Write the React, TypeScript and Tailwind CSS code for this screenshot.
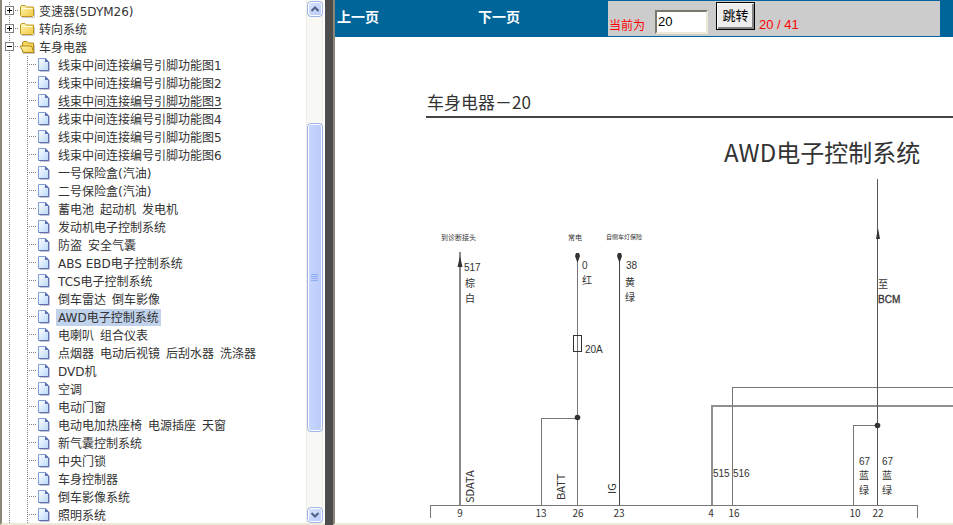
import type { ReactNode } from "react";

const items = [
  "线束中间连接编号引脚功能图1",
  "线束中间连接编号引脚功能图2",
  "线束中间连接编号引脚功能图3",
  "线束中间连接编号引脚功能图4",
  "线束中间连接编号引脚功能图5",
  "线束中间连接编号引脚功能图6",
  "一号保险盒(汽油)",
  "二号保险盒(汽油)",
  "蓄电池\u2002起动机\u2002发电机",
  "发动机电子控制系统",
  "防盗\u2002安全气囊",
  "ABS EBD电子控制系统",
  "TCS电子控制系统",
  "倒车雷达\u2002倒车影像",
  "AWD电子控制系统",
  "电喇叭\u2002组合仪表",
  "点烟器\u2002电动后视镜\u2002后刮水器\u2002洗涤器",
  "DVD机",
  "空调",
  "电动门窗",
  "电动电加热座椅\u2002电源插座\u2002天窗",
  "新气囊控制系统",
  "中央门锁",
  "车身控制器",
  "倒车影像系统",
  "照明系统",
];

const selected = "AWD电子控制系统";
const hovered = "线束中间连接编号引脚功能图3";

/* ---------- tree glyphs ---------- */

function VLine() {
  return (
    <svg className="h-[18px] w-4 shrink-0" viewBox="0 0 16 18" shapeRendering="crispEdges">
      <path d="M7.5 0V18" stroke="#808080" strokeDasharray="1 1" />
    </svg>
  );
}

function Join() {
  return (
    <svg className="h-[18px] w-[18px] shrink-0" viewBox="0 0 18 18" shapeRendering="crispEdges">
      <path d="M9.5 0V18M11 8.5H18" stroke="#808080" strokeDasharray="1 1" />
    </svg>
  );
}

function Expander({ open }: { open?: boolean }) {
  return (
    <svg className="h-[18px] w-4" viewBox="0 0 16 18" shapeRendering="crispEdges">
      <path d="M7.5 0V18M13 8.5H16" stroke="#808080" strokeDasharray="1 1" />
      <rect x="3.5" y="4.5" width="8" height="8" fill="#fff" stroke="#808080" />
      <path d={open ? "M5 8.5H10" : "M5 8.5H10M7.5 6V11"} stroke="#000" />
    </svg>
  );
}

function Folder({ open }: { open?: boolean }) {
  return (
    <svg className="h-[18px] w-[18px] shrink-0" viewBox="0 0 18 18">
      <defs>
        <linearGradient id="folder" x1="0" y1="0" x2="1" y2="1">
          <stop offset="0" stopColor="#fff7b8" />
          <stop offset="1" stopColor="#f3c73c" />
        </linearGradient>
      </defs>
      <path d="M4 15.5H16.5V7" fill="none" stroke="#c9c9d2" />
      {open ? (
        <>
          <path d="M4.5 14V5L5.5 3.5H9L10.5 5H15.5V14Z" fill="#f6d860" stroke="#b08a14" />
          <path d="M2 8H13.5L16 14.5H5.5Z" fill="url(#folder)" stroke="#b08a14" />
        </>
      ) : (
        <>
          <path d="M2.5 13.5V5L3.5 3.5H7L8.5 5H15.5V13.5L14.5 14.5H3.5Z" fill="url(#folder)" stroke="#c09a20" />
          <path d="M3.5 6.5H14.5" stroke="#fffbe0" />
        </>
      )}
    </svg>
  );
}

function Page() {
  return (
    <svg className="h-[18px] w-[18px] shrink-0" viewBox="0 0 18 18">
      <defs>
        <linearGradient id="sheet" x1="0" y1="0" x2="1" y2="1">
          <stop offset="0" stopColor="#fff" />
          <stop offset="1" stopColor="#b9d8fb" />
        </linearGradient>
      </defs>
      <path d="M4 15.5H13.5V6" fill="none" stroke="#c4c6d4" />
      <path d="M2.5 2.5H9.5L12.5 5.5V14.5H2.5Z" fill="url(#sheet)" stroke="#7f9fdb" />
      <path d="M12.5 6V14.5H3" fill="none" stroke="#5f6fb2" />
      <path d="M9 2L13 6H9Z" fill="#5f6fb2" />
    </svg>
  );
}

/* ---------- navigation tree ---------- */

function Branch({ label, open, children }: { label: string; open?: boolean; children?: ReactNode }) {
  return (
    <li>
      <div className="flex h-[18px] items-center">
        <button type="button" aria-label={label} aria-expanded={!!open} className="shrink-0">
          <Expander open={open} />
        </button>
        <Folder open={open} />
        <a href="#" className="ml-[3px] pt-px leading-4">{label}</a>
      </div>
      {children && <ul>{children}</ul>}
    </li>
  );
}

function Leaf({ label }: { label: string }) {
  return (
    <li className="flex h-[18px] items-center">
      <VLine />
      <Join />
      <Page />
      <a
        href="#"
        className={`ml-0.5 px-0.5 pt-px leading-4 ${label === selected ? "bg-[#c0d2ec]" : ""} ${
          label === hovered ? "underline underline-offset-2" : ""
        }`}
      >
        {label}
      </a>
    </li>
  );
}

function ArrowButton({ down }: { down?: boolean }) {
  return (
    <button
      type="button"
      aria-label={down ? "向下" : "向上"}
      className="flex h-4 w-4 shrink-0 items-center justify-center rounded-sm border border-[#9db5ea] bg-linear-to-br from-[#dbe5ff] to-[#b6c9f7] shadow-[inset_0_0_0_1px_#fff]"
    >
      <svg className="h-2 w-2" viewBox="0 0 8 8">
        <path d={down ? "M0.5 2L4 5.5L7.5 2" : "M0.5 6L4 2.5L7.5 6"} fill="none" stroke="#4d6185" strokeWidth="2" />
      </svg>
    </button>
  );
}

function ScrollBar() {
  return (
    <div className="flex w-[17px] shrink-0 flex-col items-center border-x border-[#eeede5] bg-[#f8f8f4] pt-px">
      <ArrowButton />
      <div className="basis-[106px]" />
      <div className="flex w-4 grow-[10] flex-col items-center justify-center gap-px rounded-sm border border-[#9db5ea] bg-linear-to-r from-[#c9d7fe] to-[#b9cbfa] shadow-[inset_0_0_0_1px_#fff]">
        <i className="h-px w-[7px] bg-[#8cabf0]" />
        <i className="h-px w-[7px] bg-[#8cabf0]" />
        <i className="h-px w-[7px] bg-[#8cabf0]" />
        <i className="h-px w-[7px] bg-[#8cabf0]" />
      </div>
      <div className="basis-[75px]" />
      <ArrowButton down />
    </div>
  );
}

function Sidebar() {
  return (
    <aside className="flex w-[325px] shrink-0 border-b-2 border-l-2 border-b-[#ece9d8] border-l-[#8a8778] bg-white pr-0.5">
      <nav className="min-w-0 flex-1 overflow-hidden whitespace-nowrap pt-0.5 font-['DejaVu_Sans','Noto_Sans_CJK_SC',sans-serif] text-[12px] leading-[18px] text-[#333]">
        <ul>
          <Branch label="变速器(5DYM26)" />
          <Branch label="转向系统" />
          <Branch label="车身电器" open>
            {items.map((label) => (
              <Leaf key={label} label={label} />
            ))}
          </Branch>
        </ul>
      </nav>
      <ScrollBar />
    </aside>
  );
}

/* ---------- page bar ---------- */

function Toolbar() {
  return (
    <header className="grid h-[37px] shrink-0 grid-cols-[142fr_131fr_332fr] bg-[#006699] pb-px pr-[13px] pt-px text-[13px]">
      <div className="pl-0.5 pt-1.5">
        <a href="#" className="text-[14px] font-bold text-white">上一页</a>
      </div>
      <div className="pl-px pt-1.5">
        <a href="#" className="text-[14px] font-bold text-white">下一页</a>
      </div>
      <form className="flex items-start whitespace-nowrap bg-[#cccccc] pl-px text-[#f00]" onSubmit={(e) => e.preventDefault()}>
        <label htmlFor="page" className="w-[46px] pt-4 text-[12px]">当前为</label>
        <input
          id="page"
          defaultValue="20"
          className="mt-[9px] h-6 w-[53px] border-2 border-b-[#ece9d8] border-l-[#7a776c] border-r-[#ece9d8] border-t-[#7a776c] bg-white pb-0.5 pl-px text-[13px] text-black outline-none"
        />
        <button
          type="submit"
          className="ml-2 mt-px h-7 w-[39px] border border-black bg-[#ededed] text-[13px] leading-6 text-black shadow-[inset_1px_1px_0_#fff,inset_-2px_-2px_0_#858585]"
        >
          跳转
        </button>
        <span className="ml-1 pt-3.5 text-[13px]">20 / 41</span>
      </form>
    </header>
  );
}

/* ---------- wiring diagram ---------- */

const pins = [
  { x: 460, n: "9" },
  { x: 541, n: "13" },
  { x: 578, n: "26" },
  { x: 619, n: "23" },
  { x: 711, n: "4" },
  { x: 734, n: "16" },
  { x: 855, n: "10" },
  { x: 878, n: "22" },
];

function Wiring() {
  return (
    <svg
      className="block h-[342px] w-[640px] max-w-none overflow-visible"
      viewBox="335 176 640 342"
      fill="#333"
      fontSize="10"
    >
      <g fill="none" stroke="#777" shapeRendering="crispEdges">
        <path d="M430.5 518V505.5H917.5V518" />
        <path d="M460 252V505" strokeWidth="2" stroke="#888" />
        <path d="M577.5 253V505M541.5 505V418.5H577" />
        <path d="M619.5 253V505" stroke="#444" />
        <path d="M712 505V406H1800" strokeWidth="2" stroke="#909090" />
        <path d="M732.5 505V387.5H1800" />
        <path d="M877.5 179V505" stroke="#555" />
        <path d="M853.5 505V425.5H877" />
        <rect x="573.5" y="335.5" width="8" height="16" stroke="#333" />
      </g>
      <path d="M460 256L462.5 267H457.5ZM878 228L880 239H876ZM576 253H579L580 256L577.5 263L575 256ZM618 253H621L622 256L619.5 263L617 256Z" />
      <circle cx="577.5" cy="417.5" r="2.8" />
      <circle cx="877.5" cy="425.5" r="2.8" />

      <text x="441" y="240" fontSize="7">到诊断接头</text>
      <text x="568" y="240" fontSize="7">常电</text>
      <text x="606" y="239" fontSize="6">自侧车灯保险</text>

      {/* wire numbers */}
      <g className="font-['Liberation_Sans',sans-serif]">
        <text x="464" y="271">517</text>
        <text x="582" y="269">0</text>
        <text x="626" y="269">38</text>
        <text x="585" y="353">20A</text>
        <text x="713" y="477">515</text>
        <text x="733" y="477">516</text>
        <text x="859" y="465">67</text>
        <text x="882" y="465">67</text>
        <text x="878" y="303" stroke="#333" strokeWidth="0.3">BCM</text>
      </g>

      {/* wire colours */}
      <g textAnchor="middle">
        <text x="470" y="287">棕</text>
        <text x="470" y="302">白</text>
        <text x="587" y="284">红</text>
        <text x="630" y="286">黄</text>
        <text x="630" y="301">绿</text>
        <text x="883" y="288">至</text>
        <text x="864" y="479">蓝</text>
        <text x="864" y="494">绿</text>
        <text x="887" y="479">蓝</text>
        <text x="887" y="494">绿</text>
      </g>

      <g fontSize="11">
        <text transform="translate(474 503) rotate(-90)">SDATA</text>
        <text transform="translate(565 500) rotate(-90)">BATT</text>
        <text transform="translate(616 494) rotate(-90)">IG</text>
      </g>

      <g textAnchor="middle">
        {pins.map((p) => (
          <text key={p.x} x={p.x} y="517">{p.n}</text>
        ))}
      </g>
    </svg>
  );
}

function Sheet() {
  return (
    <main className="min-h-0 flex-1 overflow-hidden bg-white font-['Noto_Sans_CJK_SC',sans-serif] text-[#333]">
      <h2 className="ml-[91px] mt-[53px] whitespace-nowrap border-b-2 border-[#444] pb-0.5 pl-px text-[17px] leading-6">
        车身电器－20
      </h2>
      <h1 className="mb-1.5 ml-[389px] mt-4 whitespace-nowrap text-[24px] leading-9">AWD电子控制系统</h1>
      <Wiring />
    </main>
  );
}

export default function App() {
  return (
    <div className="flex h-screen overflow-hidden bg-[#ece9d8] font-['Liberation_Sans','Noto_Sans_CJK_SC',sans-serif]">
      <Sidebar />
      <div className="w-2 shrink-0 bg-[#4d4d4d]" />
      <div className="flex min-w-0 flex-1 flex-col border-b-2 border-l-2 border-b-[#ece9d8] border-l-[#8a8778]">
        <Toolbar />
        <Sheet />
      </div>
    </div>
  );
}
